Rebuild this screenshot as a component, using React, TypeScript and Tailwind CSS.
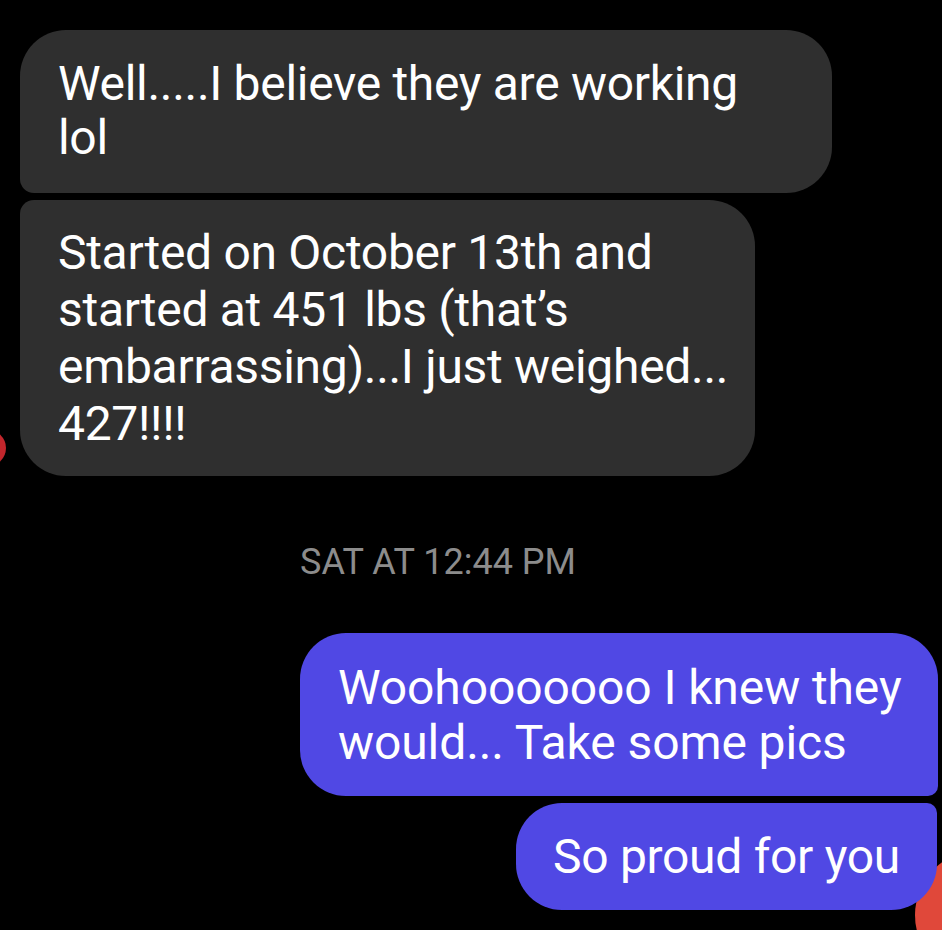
const font = { fontFamily: 'Roboto, "Liberation Sans", sans-serif' };

const App = () => {
  return (
    <div className="relative h-[930px] w-[942px] overflow-hidden bg-black text-white" style={font}>
      {/* avatar edges peeking in */}
      <div className="absolute left-[-30px] top-[430px] h-[36px] w-[36px] rounded-full bg-[#c2262c]" />
      <div className="absolute left-[915px] top-[850px] h-[130px] w-[130px] rounded-full bg-[#e0483a]" />

      <div className="relative flex flex-col pt-[30px]">
        <div className="ml-[20px] flex flex-col gap-[7px]">
          <div className="w-[812px] rounded-[46px] rounded-bl-[14px] bg-[#2f2f2f] pb-[28px] pl-[38px] pr-[20px] pt-[27px] text-[48px] leading-[54px] tracking-[-0.3px]">
            Well.....I believe they are working
            <br />
            lol
          </div>
          <div className="w-[735px] rounded-[46px] rounded-tl-[14px] bg-[#2f2f2f] py-[24px] pl-[38px] pr-[20px] text-[48px] leading-[57px] tracking-[-0.3px]">
            Started on October 13th and
            <br />
            started at 451 lbs (that’s
            <br />
            embarrassing)...I just weighed...
            <br />
            427!!!!
          </div>
        </div>

        <div className="mt-[66px] pl-[300px] text-[36px] leading-[40px] text-[#8c8c8c]">SAT AT 12:44 PM</div>

        <div className="mt-[51px] flex flex-col items-end gap-[7px] pr-[4px]">
          <div className="w-[638px] rounded-[46px] rounded-br-[10px] bg-[#5048e4] pb-[26px] pl-[38px] pr-[20px] pt-[27px] text-[48px] leading-[55px] tracking-[-0.1px]">
            Woohooooooo I knew they
            <br />
            would... Take some pics
          </div>
          <div className="mr-[1px] rounded-[46px] rounded-tr-[10px] bg-[#5048e4] px-[37px] py-[25px] text-[48px] leading-[57px] tracking-[-0.3px]">
            So proud for you
          </div>
        </div>
      </div>
    </div>
  );
};

export default App;
